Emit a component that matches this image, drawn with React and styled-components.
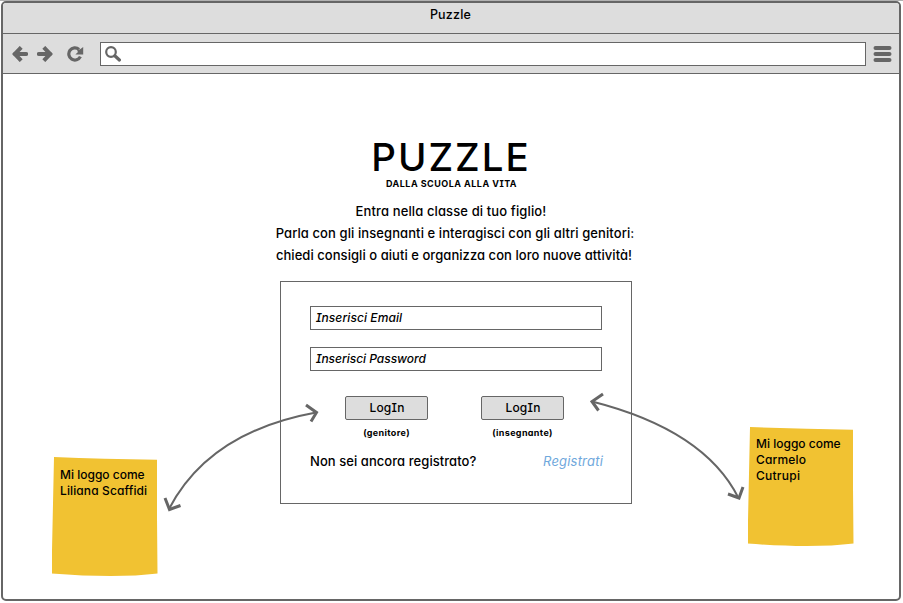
import React from 'react';
import styled, { createGlobalStyle } from 'styled-components';

const ink = '#666666';
const chrome = '#dddddd';

const GlobalStyle = createGlobalStyle`
  * { box-sizing: border-box; }
  body { margin: 0; background: #fff; overflow: hidden; }
`;

const Screen = styled.div`
  width: 903px;
  height: 603px;
  padding: 0 2px 2px 1px;
  border-top: 1px solid #b2b2b2;
  background: #fff;
  color: #000;
  font: 450 13px/22px Inter, "Liberation Sans", sans-serif;
  font-feature-settings: 'cv11', 'cv08';
  white-space: nowrap;
`;

const BrowserWindow = styled.div`
  position: relative;
  display: flex;
  flex-direction: column;
  height: 600px;
  border: 2px solid ${ink};
  border-radius: 5px;
  overflow: hidden;
`;

const TitleBar = styled.header`
  height: 31px;
  background: ${chrome};
  border-bottom: 1px solid ${ink};
  text-align: center;
  font-size: 12.5px;
  line-height: 23px;
  padding-right: 1px;
  letter-spacing: 0.2px;
`;

const Toolbar = styled.nav`
  display: flex;
  align-items: center;
  height: 40px;
  padding: 1px 7px 0 9px;
  background: ${chrome};
  border-bottom: 1px solid ${ink};
`;

const Icon = styled.svg`
  flex: none;
  display: block;
  width: ${p => p.$w || 16}px;
  height: 16px;
  margin-right: ${p => p.$gap || 0}px;
  fill: none;
  stroke: ${ink};
`;

const AddressBar = styled.div`
  flex: 1;
  height: 24px;
  margin-right: 7px;
  padding: 3px 4px;
  border: 1px solid ${ink};
  background: #fff;
`;

const Page = styled.main`
  display: flex;
  flex-direction: column;
  align-items: center;
  padding-top: 63px;
`;

const Logo = styled.h1`
  margin: 0;
  font-size: 38.5px;
  font-weight: 450;
  line-height: 41px;
  letter-spacing: 2px;
`;

const Tagline = styled.div`
  padding-left: 1px;
  font-size: 9px;
  font-weight: 650;
  line-height: 12px;
  letter-spacing: 0.48px;
`;

const Intro = styled.p`
  margin: 10px 0 0;
  text-align: center;
`;

const IntroLine = styled.span`
  display: block;
  padding-left: ${p => p.$shift || 0}px;
  letter-spacing: ${p => p.$track}px;
`;

const LoginForm = styled.section`
  width: 352px;
  height: 223px;
  margin: 15px 0 0 10px;
  padding: 24px 29px;
  border: 1px solid ${ink};
`;

const Field = styled.div`
  height: 24px;
  margin-bottom: 17px;
  padding-left: 5px;
  border: 1px solid ${ink};
  font-size: 12px;
  font-weight: 500;
  font-style: italic;
  letter-spacing: ${p => p.$track}px;
`;

const Actions = styled.div`
  display: flex;
  justify-content: space-between;
  padding: 8px 38px 0 35px;
`;

const Action = styled.div`
  width: 83px;
  text-align: center;
`;

const Button = styled.button`
  display: block;
  width: 100%;
  height: 24px;
  padding: 0 0 1px 1px;
  border: 1px solid ${ink};
  border-radius: 2px;
  background: ${chrome};
  color: #000;
  font: inherit;
  font-size: 12px;
  font-feature-settings: inherit;
  letter-spacing: 0.2px;
`;

const Role = styled.div`
  margin-top: 6px;
  font-size: 9px;
  font-weight: 700;
  line-height: 14px;
  letter-spacing: 0.35px;
`;

const SignupRow = styled.div`
  display: flex;
  justify-content: space-between;
  margin: 10px -1px 0 0;
  letter-spacing: 0.06px;
`;

const SignupLink = styled.a`
  color: #6fa8dc;
  font-style: italic;
  letter-spacing: 0.2px;
`;

const Note = styled.aside`
  position: absolute;
  left: ${p => p.$x}px;
  top: ${p => p.$y}px;
  width: 106px;
  height: 120px;
  padding: ${p => p.$pad}px 0 0 8.5px;
  background: #f1c232;
  clip-path: path('M2.5 0 Q52 2 105.5 2.7 L105.5 60 L106 116.5 Q65 121.5 0 116.5 Z');
  font-size: 12px;
  line-height: 16px;
`;

const NoteLine = styled.div`
  letter-spacing: ${p => p.$track}px;
`;

const Arrows = styled.svg`
  position: absolute;
  left: -3px;
  top: -3px;
  width: 903px;
  height: 603px;
  fill: none;
  stroke: ${ink};
  stroke-width: 2;
  pointer-events: none;
`;

const ArrowHeads = styled.path`
  stroke-width: 3;
`;

export default function App() {
  return (
    <Screen>
      <GlobalStyle />
      <BrowserWindow>
        <TitleBar>Puzzle</TitleBar>
        <Toolbar>
          <Icon $gap={9} viewBox="0 0 16 16" strokeWidth="4">
            <path d="M9.2 1.3 2.8 8l6.4 6.7" />
            <path d="M3 8h11.2" strokeLinecap="round" />
          </Icon>
          <Icon $gap={14} viewBox="0 0 16 16" strokeWidth="4">
            <path d="M6.8 1.3 13.2 8l-6.4 6.7" />
            <path d="M13 8H1.8" strokeLinecap="round" />
          </Icon>
          <Icon $w={17} $gap={16} viewBox="0 0 17 16" strokeWidth="3.2">
            <path d="M12 3.4A6.1 6.1 0 1 0 13.4 10.6" />
            <path d="M16.2 1v7.500H8.4l2.600-2.500-1-1.500 3.500-1.500Z" fill={ink} stroke="none" />
          </Icon>
          <AddressBar>
            <Icon viewBox="0 0 16 16">
              <circle cx="6" cy="6" r="4.8" strokeWidth="2.2" />
              <path d="M9.8 9.8l4.6 4.2" strokeWidth="3.2" strokeLinecap="round" />
            </Icon>
          </AddressBar>
          <Icon $w={19} viewBox="0 0 19 16" strokeWidth="4" strokeLinecap="round">
            <path d="M2.500 2h14M2.500 8h14M2.500 14h14" />
          </Icon>
        </Toolbar>
        <Page>
          <Logo>PUZZLE</Logo>
          <Tagline>DALLA SCUOLA ALLA VITA</Tagline>
          <Intro>
            <IntroLine $track={0.12}>Entra nella classe di tuo figlio!</IntroLine>
            <IntroLine $shift={8} $track={0.09}>Parla con gli insegnanti e interagisci con gli altri genitori:</IntroLine>
            <IntroLine $shift={6} $track={0.05}>chiedi consigli o aiuti e organizza con loro nuove attività!</IntroLine>
          </Intro>
          <LoginForm>
            <Field $track={0.08}>Inserisci Email</Field>
            <Field $track={-0.03}>Inserisci Password</Field>
            <Actions>
              <Action>
                <Button>LogIn</Button>
                <Role>(genitore)</Role>
              </Action>
              <Action>
                <Button>LogIn</Button>
                <Role>(insegnante)</Role>
              </Action>
            </Actions>
            <SignupRow>
              <span>Non sei ancora registrato?</span>
              <SignupLink>Registrati</SignupLink>
            </SignupRow>
          </LoginForm>
        </Page>
        <Note $x={48.5} $y={454} $pad={10}>
          <NoteLine $track={0}>Mi loggo come</NoteLine>
          <NoteLine $track={0.12}>Liliana Scaffidi</NoteLine>
        </Note>
        <Note $x={744.5} $y={424} $pad={9}>
          <NoteLine $track={0}>Mi loggo come</NoteLine>
          <NoteLine $track={0.15}>Carmelo</NoteLine>
          <NoteLine $track={0.25}>Cutrupi</NoteLine>
        </Note>
        <Arrows viewBox="0 0 903 603">
          <path d="M169 509Q209 432 316 412.5M592 401.5Q704.5 430 738.5 498" />
          <ArrowHeads d="M306 405l10.5 7.5-5.5 9M165 498l4.5 11.5 11-4M603 394l-11 7.5 6.5 9M728 494l11 4 4-11" />
        </Arrows>
      </BrowserWindow>
    </Screen>
  );
}
